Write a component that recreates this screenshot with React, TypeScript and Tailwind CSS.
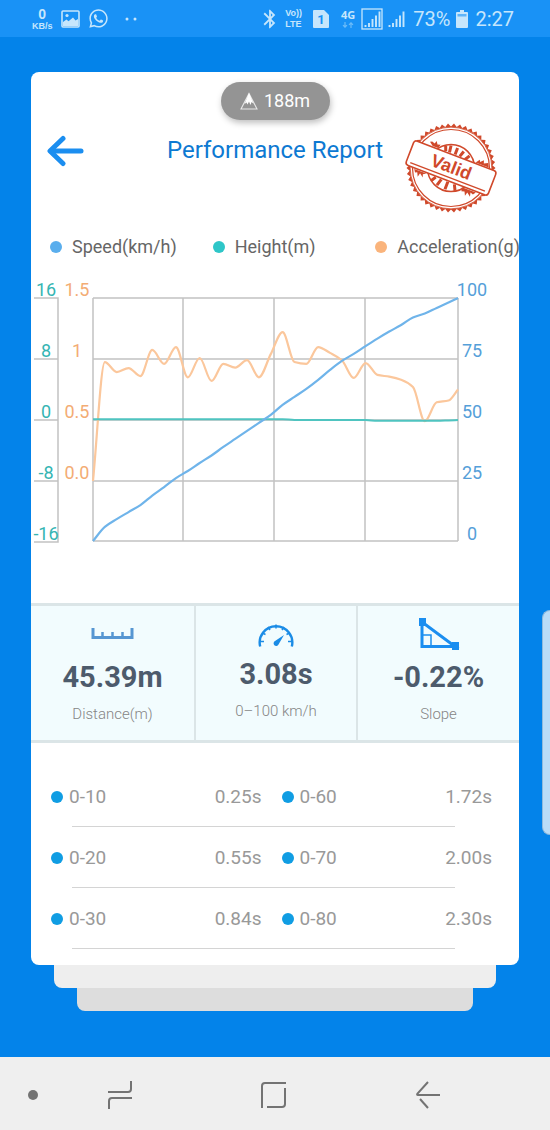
import { useMemo, type ReactNode } from 'react';
import { FaWhatsapp } from 'react-icons/fa';
import { MdBluetooth } from 'react-icons/md';

/**
 * PerformanceReport: result card of one acceleration run.
 *
 * Chart (speed / height / acceleration), key figures and the split times.
 */

type Point = [number, number];

interface Split {
  range: string;
  time: string;
}

const DURATION = 3.08; // seconds, samples are taken every 0.1 s

const SPEED = [
  0, 5.8, 9, 11.9, 14.8, 18.7, 22.2, 25.9, 28.8, 32.1, 35.2, 38.7, 42, 45.3, 48.6, 51.9, 56, 59.3,
  62.6, 66.3, 70.4, 74.1, 77, 80.2, 83.3, 86.2, 88.9, 92, 93.6, 95.9, 98.1, 100,
];

const ACCELERATION = [
  0, 0.975, 0.893, 0.926, 0.86, 1.074, 0.96, 1.098, 0.85, 1.008, 0.82, 0.96, 0.93, 0.99, 0.85, 1.04,
  1.22, 0.975, 0.96, 1.098, 1.05, 0.99, 0.845, 0.967, 0.87, 0.855, 0.83, 0.77, 0.49, 0.645, 0.66,
  0.75,
];

const HEIGHT = [
  0.1, 0.1, 0.1, 0.1, 0.1, 0.1, 0.1, 0.1, 0.1, 0.1, 0.1, 0.1, 0.1, 0.1, 0.1, 0.1, 0.1, 0, 0, 0, 0, 0,
  0, 0, -0.1, -0.1, -0.1, -0.1, -0.1, -0.1, -0.05, 0,
];

const SPLITS: [Split, Split][] = [
  [{ range: '0-10', time: '0.25s' }, { range: '0-60', time: '1.72s' }],
  [{ range: '0-20', time: '0.55s' }, { range: '0-70', time: '2.00s' }],
  [{ range: '0-30', time: '0.84s' }, { range: '0-80', time: '2.30s' }],
];

// plot area inside the 488 x 280 chart
const PLOT = { left: 62, right: 427, top: 28, bottom: 271 };
const ROWS = [28, 89, 150, 211, 271];
const COLUMNS = [62, 152, 243, 334, 427];

function toPoints(values: number[], toY: (v: number) => number): Point[] {
  return values.map((v, i) => {
    const t = Math.min(i * 0.1, DURATION);
    return [PLOT.left + (t / DURATION) * (PLOT.right - PLOT.left), toY(v)];
  });
}

/** Monotone cubic through all points, so that the peaks stay on the samples. */
function smoothPath(points: Point[]): string {
  const slope = points.slice(1).map((p, i) => (p[1] - points[i][1]) / (p[0] - points[i][0]));
  const tangent = points.map((_, i) => {
    if (i === 0) return slope[0];
    if (i === points.length - 1) return slope[i - 1];
    const a = slope[i - 1];
    const b = slope[i];
    return a * b <= 0 ? 0 : (2 * a * b) / (a + b);
  });
  return points
    .map(([x, y], i) => {
      if (i === 0) return `M${x},${y}`;
      const [px, py] = points[i - 1];
      const d = (x - px) / 3;
      return `C${px + d},${py + d * tangent[i - 1]} ${x - d},${y - d * tangent[i]} ${x},${y}`;
    })
    .join('');
}

export default function App() {
  return (
    <div className="relative flex min-h-screen flex-col bg-[#0383ea] font-['Roboto',sans-serif]">
      <StatusBar />

      <main className="flex-1 px-[31px] pt-[35px] pb-[46px]">
        <article className="overflow-hidden rounded-lg bg-white pt-[10px] pb-4">
          <AltitudeBadge />
          <ReportHeader />
          <Legend />
          <RunChart />
          <KeyFigures />
          <SplitList />
        </article>
        <div className="mx-[23px] h-[23px] rounded-b-lg bg-[#eeeeee]" />
        <div className="mx-[46px] h-[23px] rounded-b-lg bg-[#dddddd]" />
      </main>

      {/* edge panel handle */}
      <div className="absolute top-[610px] right-0 h-[225px] w-2 rounded-l-lg border border-r-0 border-[#8fb9dc] bg-[#b9dcf8]" />

      <NavigationBar />
    </div>
  );
}

function StatusBar() {
  return (
    <header className="flex h-[37px] items-center justify-between bg-[#1992f6] pr-[36px] pl-8 text-[#c6e6fc]">
      <div className="flex items-center gap-2">
        <div className="flex flex-col items-center font-['Liberation_Sans',sans-serif]">
          <span className="text-[14px] leading-[14px] font-bold">0</span>
          <span className="text-[9px] leading-[10px] font-bold">KB/s</span>
        </div>
        <svg width="19" height="18" viewBox="0 0 19 18" fill="none">
          <rect x="1" y="1" width="17" height="16" rx="1" stroke="currentColor" strokeWidth="1.6" />
          <circle cx="6" cy="5.5" r="1.6" fill="currentColor" />
          <path d="M2 16v-4l3.500-2.500 2 1.800L12 7.500l2.500 3L17 9v7z" fill="currentColor" />
        </svg>
        <FaWhatsapp className="h-[21px] w-[21px]" />
        <svg className="ml-[7px]" width="14" height="4" viewBox="0 0 14 4" fill="currentColor">
          <circle cx="3" cy="2" r="1.500" />
          <circle cx="11" cy="2" r="1.500" />
        </svg>
      </div>

      <div className="flex items-center">
        <MdBluetooth className="mr-1 h-[22px] w-[22px]" />
        <div className="mr-[11px] flex flex-col font-['Liberation_Sans',sans-serif] text-[9px] leading-[11px] font-bold">
          <span>Vo))</span>
          <span>LTE</span>
        </div>
        <svg className="mr-3" width="16" height="18" viewBox="0 0 16 18">
          <path d="M1 0h10l5 5v12a1 1 0 0 1-1 1H1a1 1 0 0 1-1-1V1a1 1 0 0 1 1-1z" fill="currentColor" />
          <text x="8" y="14" textAnchor="middle" className="fill-[#1992f6] text-[13px] font-bold">1</text>
        </svg>
        <div className="mr-[6px] flex flex-col items-center gap-[2px]">
          <span className="font-['Noto_Sans',sans-serif] text-[11px] leading-[11px] font-bold">4G</span>
          <svg width="12" height="6" viewBox="0 0 12 6" fill="none" stroke="#6cbcf9" strokeWidth="1.200">
            <path d="M3 0v5M1 3.200l2 2 2-2M9 6V1M7 2.800l2-2 2 2" />
          </svg>
        </div>
        <svg className="mr-1" width="22" height="22" viewBox="0 0 22 22" fill="none">
          <rect x="1" y="1" width="20" height="20" stroke="currentColor" strokeWidth="1.300" />
          <SignalBars />
        </svg>
        <svg className="mr-[6px]" width="20" height="22" viewBox="2 0 20 22" fill="none">
          <SignalBars />
        </svg>
        <span className="mr-[6px] text-[20px] leading-6">73%</span>
        <svg className="mr-[7px]" width="12" height="18" viewBox="0 0 12 18">
          <path d="M4 0h4v2h3a1 1 0 0 1 1 1v14a1 1 0 0 1-1 1H1a1 1 0 0 1-1-1V3a1 1 0 0 1 1-1h3z" fill="currentColor" />
          <path d="M1.500 4h9v2.500h-9z" fill="#5fb4f8" />
        </svg>
        <span className="text-[20px] leading-6">2:27</span>
      </div>
    </header>
  );
}

function SignalBars() {
  return (
    <path
      d="M4.500 19v-2M8 19v-4M11.500 19v-8M15 19V7.500M18.500 19V3.500"
      stroke="currentColor"
      strokeWidth="1.900"
    />
  );
}

function AltitudeBadge() {
  return (
    <div className="mx-auto flex h-[38px] w-[109px] items-center justify-center gap-[6px] rounded-full bg-[#949494] text-white shadow-[1px_3px_6px_rgba(0,0,0,0.25)]">
      <svg width="18" height="18" viewBox="0 0 18 18" fill="none">
        <path d="M9 1.500 17 17H1z" stroke="#e8e8e8" strokeWidth="1.100" />
        <path d="M9 1 13.500 11.500 11.500 10 10.500 13 9 9.500 7.500 12.500 6.500 10.500 4.500 12z" fill="#fff" />
      </svg>
      <span className="text-[18px] leading-6">188m</span>
    </div>
  );
}

function ReportHeader() {
  return (
    <div className="mt-[2px] grid h-[92px] grid-cols-[1fr_auto_1fr] items-start px-4">
      <button type="button" aria-label="Back" className="mt-[13px] h-8 w-[38px]">
        <svg
          width="38"
          height="32"
          viewBox="0 0 38 32"
          fill="none"
          stroke="#1b8ef0"
          strokeWidth="5"
          strokeLinecap="round"
          strokeLinejoin="round"
        >
          <path d="M4 16h30" />
          <path d="M16 3.500 3 16l13 12.500" />
        </svg>
      </button>
      <h1 className="mt-3 text-[24px] leading-8 whitespace-nowrap text-[#0d79d2]">Performance Report</h1>
      <div className="flex justify-end">
        <ValidStamp />
      </div>
    </div>
  );
}

function ValidStamp() {
  const teeth = useMemo(() => {
    const count = 46;
    return Array.from({ length: count * 2 }, (_, i) => {
      const r = i % 2 === 0 ? 44.5 : 41.5;
      const a = (i * Math.PI) / count;
      return `${(r * Math.cos(a)).toFixed(1)},${(r * Math.sin(a)).toFixed(1)}`;
    }).join(' ');
  }, []);

  return (
    <svg className="shrink-0" width="99" height="92" viewBox="-47 -46 99 92" fill="none">
      <polygon points={teeth} fill="#d0492b" />
      <circle r="41" fill="#fff" />
      <circle r="40.800" stroke="#d0492b" strokeWidth="0.800" />
      <circle r="38.500" stroke="#d0492b" strokeWidth="1.200" />
      <circle r="23.500" stroke="#d0492b" strokeWidth="1.500" />
      <g transform="rotate(21)">
        <path
          d="M-13-19l2 5M-8-21l1 7M-1-21v7M6-20l-2 6M13-18l-3 5M-11 14l-3 5M-5 14l-2 7M2 14v8M9 14l3 6"
          stroke="#d0492b"
          strokeWidth="3"
        />
        <path
          d="M-25-14l-4-3 2-1 3 1 1-3 2 3 3-1-1 4zM21-14l3-4 1 2 3-3 1 3 4-2 2 4zM-34 14h13l-3 2 1 3-4-3-1 4-2-4-2 1zM17 14h15l-2 3-3-1 1 4-4-3-1 4-2-4-3 1z"
          fill="#d0492b"
        />
        <rect x="-44" y="-13" width="88" height="26" rx="3" fill="#fff" stroke="#d0492b" strokeWidth="1.600" />
        <path d="M-40 9.500h80" stroke="#d0492b" strokeWidth="1.300" />
        <text
          y="5"
          textAnchor="middle"
          className="fill-[#d0492b] font-['Liberation_Sans',sans-serif] text-[18px] font-bold"
        >
          Valid
        </text>
      </g>
    </svg>
  );
}

function Legend() {
  return (
    <ul className="mt-[21px] grid grid-cols-3 text-[18px] leading-6 text-[#666666]">
      <LegendItem dotClass="bg-[#5aaeed]" label="Speed(km/h)" />
      <LegendItem dotClass="bg-[#2ec6c8]" label="Height(m)" />
      <LegendItem dotClass="bg-[#fab47c]" label="Acceleration(g)" />
    </ul>
  );
}

function LegendItem({ dotClass, label }: { dotClass: string; label: string }) {
  return (
    <li className="flex min-w-0 items-center gap-[10px] pl-[19px] whitespace-nowrap">
      <span className={`h-3 w-3 shrink-0 rounded-full ${dotClass}`} />
      {label}
    </li>
  );
}

function RunChart() {
  const { speed, acceleration, height } = useMemo(
    () => ({
      speed: smoothPath(toPoints(SPEED, (v) => PLOT.bottom - (v / 100) * (PLOT.bottom - PLOT.top))),
      acceleration: smoothPath(toPoints(ACCELERATION, (v) => 211 - v * 122)),
      height: smoothPath(toPoints(HEIGHT, (v) => 150 - v * 7.6)),
    }),
    [],
  );

  return (
    <svg
      role="img"
      aria-label="Speed, height and acceleration over time"
      className="mt-[11px] block w-full"
      viewBox="0 0 488 280"
      fill="none"
    >
      <g stroke="#c2c2c2" strokeWidth="1.500">
        {ROWS.map((y) => (
          <path key={y} d={`M${PLOT.left} ${y}H${PLOT.right}`} />
        ))}
        {COLUMNS.map((x) => (
          <path key={x} d={`M${x} ${PLOT.top}V${PLOT.bottom}`} />
        ))}
        <path d="M3 28H27V272H3M3 89H27M3 150H27M3 211H27" />
      </g>

      <path d={acceleration} stroke="#fbc79c" strokeWidth="2.200" />
      <path d={height} stroke="#4fc4c0" strokeWidth="2" />
      <path d={speed} stroke="#6fb4ea" strokeWidth="2.200" />

      <g className="text-[18px]" textAnchor="middle">
        <AxisLabels x={15} labels={['16', '8', '0', '-8', '-16']} className="fill-[#35b5b3]" />
        <AxisLabels x={46} labels={['1.5', '1', '0.5', '0.0']} className="fill-[#f3ac74]" />
        <AxisLabels x={441} labels={['100', '75', '50', '25', '0']} className="fill-[#559fd9]" />
      </g>
    </svg>
  );
}

function AxisLabels({ x, labels, className }: { x: number; labels: string[]; className: string }) {
  return (
    <g className={className}>
      {labels.map((label, i) => (
        <text key={label} x={x} y={26 + i * 61}>
          {label}
        </text>
      ))}
    </g>
  );
}

function KeyFigures() {
  return (
    <section className="mt-[53px] grid h-[140px] grid-cols-[165fr_162fr_161fr] divide-x-2 divide-[#dbe5e7] border-y-[3px] border-[#dbe5e7] bg-[#f2fcfe]">
      <Figure value="45.39m" label="Distance(m)">
        <svg width="43" height="32" viewBox="0 0 43 32" fill="none" stroke="#5696d2">
          <path d="M2 10v9.500h39V10" strokeWidth="3" />
          <path d="M11.500 19v-5M21.500 19v-5M31.500 19v-5" strokeWidth="2.500" />
        </svg>
      </Figure>
      <Figure value="3.08s" label="0–100 km/h" raised>
        <svg width="36" height="32" viewBox="0 0 36 32" fill="none" stroke="#1b8ce6">
          <path d="M2.200 31.500A16.300 16.300 0 1 1 33.800 31.500" strokeWidth="2.400" />
          <path
            d="M2 26.500h4M4.500 18l3 1.500M10 12l2 3M18 9.500v4M26 12l-2 3M31.500 18l-3 1.500M34 26.500h-4"
            strokeWidth="1.500"
          />
          <path d="M17 26 26 20 20.500 29.500a2.600 2.600 0 1 1-3.500-3.500z" fill="#1b8ce6" stroke="none" />
        </svg>
      </Figure>
      <Figure value="-0.22%" label="Slope">
        <svg width="42" height="32" viewBox="0 0 42 32" fill="none" stroke="#1b8ef0">
          <path d="M4 4v24.500H37z" strokeWidth="3" />
          <path d="M5 17h8v10" strokeWidth="1.500" />
          <path d="M1 0h7v8H1zM34 24h7v8h-7z" fill="#1b8ef0" stroke="none" />
        </svg>
      </Figure>
    </section>
  );
}

function Figure({
  value,
  label,
  raised = false,
  children,
}: {
  value: string;
  label: string;
  raised?: boolean;
  children: ReactNode;
}) {
  return (
    <div className={`flex flex-col items-center ${raised ? 'pt-[9px]' : 'pt-3'}`}>
      {children}
      <strong className="mt-[11px] text-[29px] leading-8 font-bold text-[#4d5b6c]">{value}</strong>
      <span className="mt-[9px] text-[15px] leading-6 font-light text-[#858585]">{label}</span>
    </div>
  );
}

function SplitList() {
  return (
    <ul className="pt-[23px] text-[19px] leading-6 text-[#999999]">
      {SPLITS.map((pair) => (
        <li key={pair[0].range} className="flex h-[61px] flex-col">
          <div className="grid flex-1 grid-cols-2 items-center gap-5 pt-px pr-[27px] pl-5">
            {pair.map((split) => (
              <div key={split.range} className="flex items-center">
                <span className="mr-[6px] h-3 w-3 rounded-full bg-[#109de3]" />
                <span>{split.range}</span>
                <span className="ml-auto">{split.time}</span>
              </div>
            ))}
          </div>
          <hr className="mr-16 ml-[41px] border-[#d4d4d4]" />
        </li>
      ))}
    </ul>
  );
}

function NavigationBar() {
  return (
    <nav className="flex h-[73px] items-center bg-[#efefef] pt-[2px] pl-7 text-[#737373]">
      <span className="h-[10px] w-[10px] rounded-full bg-current" />
      <button type="button" aria-label="Recent apps" className="ml-[69px]">
        <svg width="26" height="30" viewBox="0 0 26 30" fill="none" stroke="currentColor" strokeWidth="2">
          <path d="M1 12h20a3 3 0 0 0 3-3V1" />
          <path d="M25 18H5a3 3 0 0 0-3 3v8" />
        </svg>
      </button>
      <button type="button" aria-label="Home" className="ml-[127px]">
        <svg width="28" height="28" viewBox="0 0 28 28" fill="none" stroke="currentColor" strokeWidth="2">
          <path d="M2 27V5a3 3 0 0 1 3-3h21" />
          <path d="M25 7v16a3 3 0 0 1-3 3H7" />
        </svg>
      </button>
      <button type="button" aria-label="Back" className="ml-[127px]">
        <svg width="26" height="30" viewBox="0 0 26 30" fill="none" stroke="currentColor" strokeWidth="2">
          <path d="M13 2 2.500 13.500Q1.500 15 3 15H25" />
          <path d="M5 19l8 9" />
        </svg>
      </button>
    </nav>
  );
}
